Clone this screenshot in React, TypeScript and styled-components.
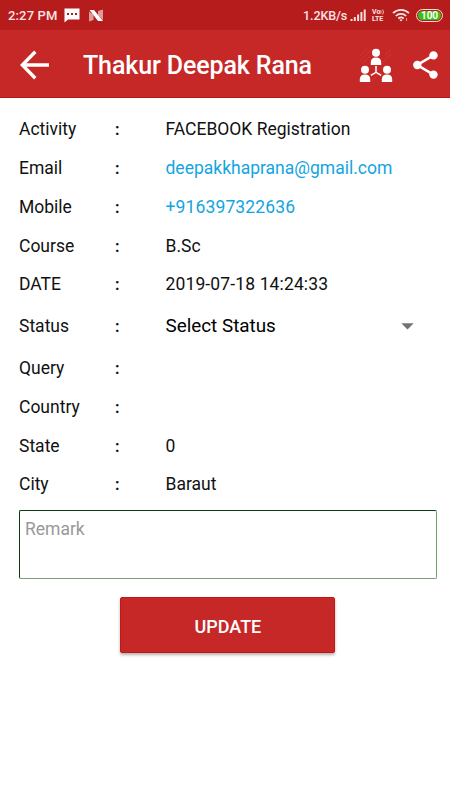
import React from 'react';
import styled, { createGlobalStyle } from 'styled-components';

const GlobalStyle = createGlobalStyle`
  * { box-sizing: border-box; }
  body { margin: 0; background: #fff; font-family: Roboto, "Liberation Sans", sans-serif; }
`;

const Screen = styled.main`
  width: 450px;
  height: 800px;
  display: flex;
  flex-direction: column;
  background: #fff;
  overflow: hidden;
`;

const StatusBar = styled.div`
  height: 30px;
  flex: none;
  display: flex;
  align-items: center;
  padding: 0 7px 0 8px;
  background: #b71c1c;
  color: #fbe4e4;
  font-size: 13px;
  font-weight: 500;
  white-space: nowrap;

  svg { display: block; flex: none; }
`;

const Clock = styled.span`
  width: 56px;
  letter-spacing: 0.15px;
`;

const Speed = styled.span`
  width: 47px;
  margin-left: auto;
  font-size: 12.5px;
  letter-spacing: -0.1px;
`;

const VoLte = styled.div`
  display: flex;
  flex-direction: column;
  width: 15px;
  margin: 0 5px 0 5px;
  padding-top: 1px;
  font-size: 7px;
  line-height: 7px;
  font-weight: 700;
`;

const VoiceLine = styled.span`
  display: flex;
  align-items: center;
  height: 7px;
`;

const Battery = styled.div`
  width: 27px;
  height: 13px;
  margin-left: 6px;
  padding: 1px;
  border: 1px solid #f5dede;
  border-radius: 6.5px;
`;

const Charge = styled.div`
  height: 9px;
  border-radius: 4.5px;
  background: #3fbd12;
  color: #fff;
  font-size: 10px;
  line-height: 9.5px;
  font-weight: 700;
  text-align: center;
`;

const AppBar = styled.header`
  height: 68px;
  flex: none;
  display: flex;
  align-items: center;
  padding: 2px 12px 0 20px;
  background: #c62828;
  border-bottom: 1px solid #b91717;
  color: #fff;

  svg { display: block; flex: none; }
`;

const Title = styled.h1`
  flex: 1;
  margin: 2px 0 0 34px;
  font-size: 25px;
  line-height: 30px;
  font-weight: 500;
  letter-spacing: -0.12px;
  white-space: nowrap;
`;

const Details = styled.section`
  display: flex;
  flex-direction: column;
  padding: 12px 0 0 19px;
`;

const Row = styled.div<{ $tall?: boolean }>`
  height: ${p => (p.$tall ? 45 : 38.75)}px;
  display: grid;
  grid-template-columns: 96px 50.5px 1fr;
  align-items: center;
  font-size: 17.5px;
  line-height: 24px;
  color: #111;
  white-space: nowrap;
`;

const Colon = styled.span`
  padding-top: 2px;
  font-size: 16px;
  font-weight: 700;
`;

const Value = styled.span<{ $link?: boolean; $numeric?: boolean }>`
  color: ${p => (p.$link ? '#13a5e0' : '#111')};
  letter-spacing: ${p => (p.$numeric ? '0.13px' : 'normal')};
`;

const Picker = styled.div`
  display: flex;
  align-items: center;
  justify-content: space-between;
  padding-right: 36px;
  font-size: 18.85px;
  color: #000;
`;

const Remark = styled.textarea`
  display: block;
  width: 418px;
  height: 69px;
  margin: 6px 0 0 19px;
  padding: 7px 5px;
  flex: none;
  border: 1px solid #739f73;
  border-top-color: #093c09;
  border-left-color: #093c09;
  border-radius: 2px;
  background: #fff;
  font: 17.5px/22px Roboto, sans-serif;
  resize: none;
  outline: none;

  &::placeholder { color: #999; opacity: 1; }
`;

const UpdateButton = styled.button`
  width: 215px;
  height: 56px;
  flex: none;
  margin: 18.5px 0 0 120.4px;
  padding: 2px 0 0;
  border: 1px solid #c51515;
  border-radius: 2px;
  background: #c62828;
  box-shadow: 0 2px 3px rgba(0, 0, 0, 0.3);
  color: #fff;
  font: 500 18px Roboto, sans-serif;
`;

const Gap = styled.span<{ $w: number }>`
  flex: 0 0 ${p => p.$w}px;
`;

type Field = {
  label: string;
  value?: string;
  link?: boolean;
  numeric?: boolean;
  picker?: boolean;
};

const fields: Field[] = [
  { label: 'Activity', value: 'FACEBOOK Registration' },
  { label: 'Email', value: 'deepakkhaprana@gmail.com', link: true },
  { label: 'Mobile', value: '+916397322636', link: true, numeric: true },
  { label: 'Course', value: 'B.Sc' },
  { label: 'DATE', value: '2019-07-18 14:24:33', numeric: true },
  { label: 'Status', value: 'Select Status', picker: true },
  { label: 'Query' },
  { label: 'Country' },
  { label: 'State', value: '0' },
  { label: 'City', value: 'Baraut' },
];

const MessageIcon = () => (
  <svg width="16" height="15" viewBox="0 0 16 15">
    <path d="M.5 .5h15v11H4l-3.5 3z" fill="#fff" />
    <path d="M3 5h2v2H3zM7 5h2v2H7zM11 5h2v2h-2z" fill="#b71c1c" />
  </svg>
);

const NougatIcon = () => (
  <svg width="16" height="13" viewBox="0 0 16 13">
    <path d="M1 2.5L5.5 6v5L1 12.5zM15 .5V11l-5-5V2z" fill="#df9b9b" />
    <path d="M1.5 1H6l9 11h-5z" fill="#fff" />
  </svg>
);

const SignalIcon = () => (
  <svg width="17" height="12" viewBox="0 0 17 12" fill="#f5dede">
    <path d="M.5 10h2v2h-2zM3.8 8h2v4h-2zM7.1 5.5h2V12h-2zM10.4 3h2v9h-2zM13.7 .5h2V12h-2z" />
  </svg>
);

const SoundWaves = () => (
  <svg width="5" height="6" viewBox="0 0 5 6" fill="none" stroke="#f5dede" strokeWidth=".8">
    <path d="M.7 1.3q1 1.7 0 3.4M2.6.5q1.8 2.5 0 5" />
  </svg>
);

const WifiIcon = () => (
  <svg width="18" height="14" viewBox="0 0 18 14" fill="none" stroke="#f8e5e5" strokeWidth="1.7">
    <path d="M1 5.2C5.5.8 12.5.8 17 5.2M3.8 8c3-2.8 7.4-2.8 10.4 0M6.3 10.5c1.7-1.5 3.7-1.5 5.4 0" />
    <path d="M7.4 11.8L9 13.4l1.6-1.6C9.6 11 8.4 11 7.4 11.8z" fill="#f8e5e5" stroke="none" />
    <path d="M14.5 10v3" strokeWidth="1" opacity=".6" />
  </svg>
);

const BackIcon = () => (
  <svg width="29" height="30" viewBox="0 0 29 30" fill="none" stroke="#fff" strokeWidth="3.4">
    <path d="M29 15H2.5M15.3 1.8L2.3 15l13 13.2" />
  </svg>
);

const TeamIcon = () => (
  <svg width="34" height="34" viewBox="0 0 34 34" fill="#fff">
    <g stroke="#d45050" strokeWidth=".7" opacity=".55">
      <path d="M1 8l7-7M1 13L13 1M3 16L11 8M26 7l6-6M24 14l8-8M13 33l9-9" />
    </g>
    <circle cx="17" cy="4.8" r="4" />
    <path d="M11.8 17v-2.5c0-3.3 1.8-5 5.2-5s5.2 1.7 5.2 5V17z" />
    <circle cx="6" cy="21.8" r="4" />
    <path d="M.8 34v-2.5c0-3.3 1.8-5 5.2-5s5.2 1.7 5.2 5V34z" />
    <circle cx="28" cy="21.8" r="4" />
    <path d="M22.8 34v-2.5c0-3.3 1.8-5 5.2-5s5.2 1.7 5.2 5V34z" />
    <path d="M17 18v6.3l-5.2 3M17 24.3l5.2 3" fill="none" stroke="#fff" strokeWidth="1.5" />
  </svg>
);

const ShareIcon = () => (
  <svg width="25" height="28" viewBox="0 0 25 28">
    <path d="M20.5 4.4L4.2 14l16.3 9.6" fill="none" stroke="#fff" strokeWidth="2.6" />
    <g fill="#fff">
      <circle cx="20.5" cy="4.4" r="4.2" />
      <circle cx="4.3" cy="14" r="4.2" />
      <circle cx="20.5" cy="23.6" r="4.2" />
    </g>
  </svg>
);

const Arrow = () => (
  <svg width="13" height="7" viewBox="0 0 13 7">
    <path d="M.3.2h12.4L6.5 6.6z" fill="#737373" />
  </svg>
);

export default function App() {
  return (
    <>
      <GlobalStyle />
      <Screen>
        <StatusBar>
          <Clock>2:27 PM</Clock>
          <MessageIcon />
          <Gap $w={8} />
          <NougatIcon />
          <Speed>1.2KB/s</Speed>
          <SignalIcon />
          <VoLte>
            <VoiceLine>Vo<SoundWaves /></VoiceLine>
            <span>LTE</span>
          </VoLte>
          <WifiIcon />
          <Battery><Charge>100</Charge></Battery>
        </StatusBar>
        <AppBar>
          <BackIcon />
          <Title>Thakur Deepak Rana</Title>
          <TeamIcon />
          <Gap $w={20} />
          <ShareIcon />
        </AppBar>
        <Details>
          {fields.map(f => (
            <Row key={f.label} $tall={f.picker}>
              <span>{f.label}</span>
              <Colon>:</Colon>
              {f.picker ? (
                <Picker>{f.value}<Arrow /></Picker>
              ) : (
                <Value $link={f.link} $numeric={f.numeric}>{f.value}</Value>
              )}
            </Row>
          ))}
        </Details>
        <Remark placeholder="Remark" />
        <UpdateButton>UPDATE</UpdateButton>
      </Screen>
    </>
  );
}
